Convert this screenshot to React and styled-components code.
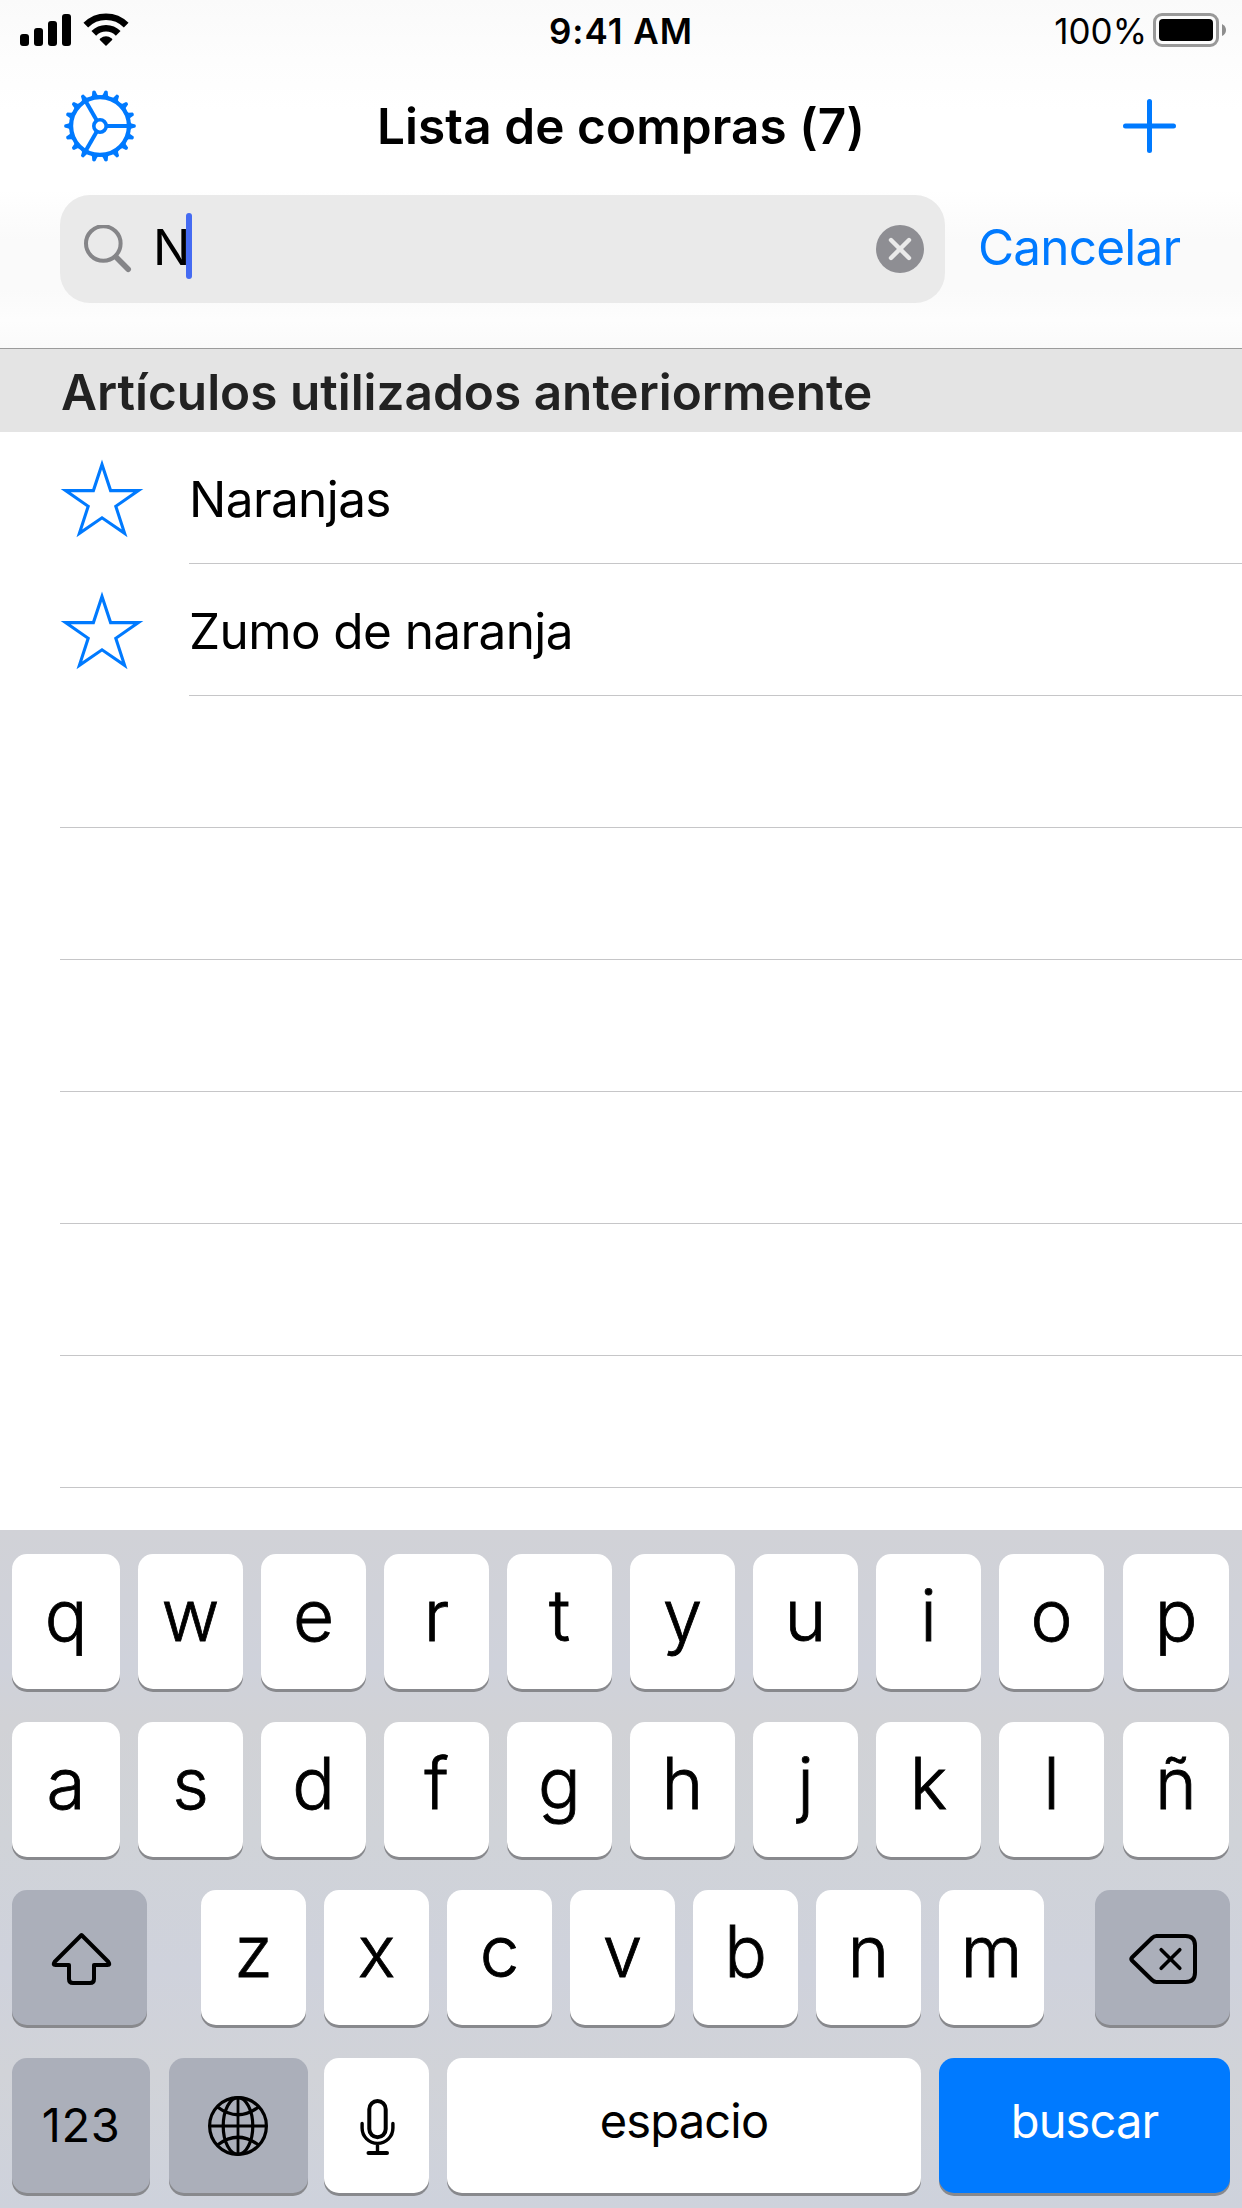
import React, { useState } from 'react';
import styled, { createGlobalStyle } from 'styled-components';

const GlobalStyle = createGlobalStyle`
  * {
    box-sizing: border-box;
  }

  body {
    margin: 0;
    background: #fff;
    font-family: Inter, "Liberation Sans", sans-serif;
    color: #000;
  }
`;

const Screen = styled.div`
  width: 1242px;
  height: 2208px;
  display: flex;
  flex-direction: column;
  overflow: hidden;
  background: #fff;
`;

const Header = styled.header`
  height: 349px;
  flex: none;
  border-bottom: 1px solid #9b9b9b;
  background: linear-gradient(#fafafa 0, #fdfdfd 60px, #fff 110px, #fff 190px, #fafafa 240px, #fafafa 290px, #fdfdfd 320px, #fafafa 348px);
`;

const StatusBar = styled.div`
  display: grid;
  grid-template-columns: 1fr auto 1fr;
  align-items: center;
  height: 60px;
  padding: 3px 16px 0 16px;
  font-size: 35px;
  line-height: 40px;
`;

const StatusGroup = styled.div`
  display: flex;
  align-items: center;
  justify-content: ${(props) => (props.$end ? 'flex-end' : 'flex-start')};
  gap: ${(props) => (props.$end ? '6px' : '12px')};
  padding-left: ${(props) => (props.$end ? 0 : '4px')};

  svg {
    display: block;
    margin-top: -3px;
  }
`;

const Clock = styled.span`
  margin-top: -2px;
  font-weight: 600;
  letter-spacing: 1px;
`;

const BatteryLevel = styled.span`
  margin-top: -2px;
  letter-spacing: 0;
`;

const NavBar = styled.div`
  display: grid;
  grid-template-columns: 1fr auto 1fr;
  align-items: center;
  height: 132px;
  padding: 0 60px;
`;

const IconButton = styled.button`
  display: flex;
  justify-self: ${(props) => (props.$end ? 'end' : 'start')};
  padding: 0;
  border: none;
  background: none;
  color: #007aff;
  cursor: pointer;
`;

const Title = styled.h1`
  margin: 0;
  font-size: 49.5px;
  font-weight: 600;
  line-height: 60px;
  letter-spacing: 0.07px;
  white-space: nowrap;
`;

const SearchRow = styled.div`
  display: flex;
  align-items: center;
  padding: 3px 60px 0;
`;

const SearchField = styled.div`
  display: flex;
  align-items: center;
  width: 885px;
  height: 108px;
  padding: 0 21px 0 24px;
  border-radius: 30px;
  background: #eaeaea;
`;

const SearchText = styled.div`
  flex: 1;
  display: flex;
  align-items: center;
  height: 66px;
  margin: 0 0 6px 21px;
  font-size: 49.5px;
  line-height: 66px;
`;

const Query = styled.span`
  padding-top: 2px;
`;

const Caret = styled.span`
  width: 6px;
  height: 66px;
  margin-left: -4px;
  border-radius: 3px;
  background: #456bf2;
`;

const CancelButton = styled(IconButton)`
  margin: -4px 0 0 33px;
  font: 400 49.5px/60px Inter, "Liberation Sans", sans-serif;
  letter-spacing: -0.8px;
`;

const SectionTitle = styled.h2`
  flex: none;
  height: 83px;
  margin: 0;
  padding: 2px 61px 0;
  background: #e4e4e4;
  color: #222;
  font-size: 49.5px;
  font-weight: 600;
  line-height: 82px;
  letter-spacing: 0;
  white-space: nowrap;
`;

const List = styled.ul`
  flex: 1;
  margin: 0;
  padding: 0;
  list-style: none;
  overflow: hidden;
`;

const Item = styled.li`
  display: flex;
  height: 132px;
  padding-left: 60px;
`;

const ItemStar = styled.div`
  width: 129px;
  padding-top: 26px;
`;

const ItemBody = styled.div`
  flex: 1;
  border-bottom: 1px solid #c6c6c8;
  font-size: 49.5px;
  line-height: 134px;
  letter-spacing: -0.6px;
`;

const Keyboard = styled.div`
  flex: none;
  display: flex;
  flex-direction: column;
  gap: 33px;
  height: 678px;
  padding: 24px 12px 0;
  background: linear-gradient(#d1d2d7 0, #cfd2db 20%, #d1d2d6 28%, #d0d3d8 45%, #cfd2dc 65%, #d1d3d8 80%, #ced2dc 100%);
`;

const KeyRow = styled.div`
  display: flex;
  height: 135px;
`;

const keyColors = {
  light: '#fff',
  dark: '#abafba',
  blue: '#007aff',
};

const Key = styled.button`
  display: flex;
  flex: none;
  align-items: center;
  justify-content: center;
  width: ${(props) => props.$width || 105}px;
  height: 135px;
  margin: 0 0 0 ${(props) => props.$gap ?? 18}px;
  padding: 0 0 ${(props) => props.$lift || 0}px;
  border: none;
  border-radius: 15px;
  background: ${(props) => keyColors[props.$tone || 'light']};
  box-shadow: 0 3px 0 #88898d;
  color: ${(props) => (props.$tone === 'blue' ? '#fff' : '#000')};
  font-family: Inter, "Liberation Sans", sans-serif;
  font-size: ${(props) => props.$size || 71}px;
  font-weight: ${(props) => (props.$size ? 400 : 300)};
  line-height: 80px;
  letter-spacing: ${(props) => props.$spacing || 0}px;
  -webkit-text-stroke: ${(props) => (props.$size ? 0 : '0.8px')} #000;
`;

const SignalIcon = () => (
  <svg width="51" height="34" viewBox="0 0 51 34">
    <rect x="0" y="21" width="9" height="12" rx="3" />
    <rect x="14" y="15" width="9" height="18" rx="3" />
    <rect x="28" y="8" width="9" height="25" rx="3" />
    <rect x="42" y="1" width="9" height="32" rx="3" />
  </svg>
);

const WifiIcon = () => (
  <svg width="46" height="34" viewBox="0 0 46 34">
    <g fill="none" stroke="#000" strokeWidth="6.6">
      <path d="M2.8 12.2 A28.5 28.5 0 0 1 43.2 12.2" />
      <path d="M10.8 20.3 A17.2 17.2 0 0 1 35.2 20.3" />
    </g>
    <path d="M23 33 L16.9 27 Q16.2 26.2 17.2 25.5 Q23 21.2 28.8 25.5 Q29.8 26.2 29.1 27 Z" />
  </svg>
);

const BatteryIcon = () => (
  <svg width="73" height="34" viewBox="0 0 73 34">
    <rect x="1.5" y="1.5" width="63" height="31" rx="7.5" fill="none" stroke="#999" strokeWidth="3" />
    <rect x="6" y="6" width="54" height="22" rx="4" />
    <path d="M69 11 Q73 13 73 17 Q73 21 69 23 Z" fill="#8e8e8e" />
  </svg>
);

const TEETH = Array.from({ length: 18 }, (_, i) => i * 20);
const SPOKES = [0, 120, 240];

const GearIcon = () => (
  <svg width="80" height="74" viewBox="-40 -37 80 74">
    <g fill="none" stroke="currentColor">
      <circle r="28.9" strokeWidth="4.2" />
      <circle r="6.2" strokeWidth="3.6" />
      {SPOKES.map((angle) => (
        <path key={angle} d="M7 0 H28" strokeWidth="4" transform={`rotate(${angle})`} />
      ))}
    </g>
    {TEETH.map((angle) => (
      <path
        key={angle}
        d="M29.5 -4.6 L31.5 -2.6 L35.3 -1.6 Q36.6 0 35.3 1.6 L31.5 2.6 L29.5 4.6 Z"
        fill="currentColor"
        transform={`rotate(${angle})`}
      />
    ))}
  </svg>
);

const PlusIcon = () => (
  <svg width="66" height="60" viewBox="0 0 66 60">
    <path d="M9.5 30 H57.5 M33.5 5.5 V54.5" fill="none" stroke="currentColor" strokeWidth="5" strokeLinecap="round" />
  </svg>
);

const SearchIcon = () => (
  <svg width="48" height="48" viewBox="0 0 48 48">
    <g fill="none" stroke="#858588" strokeLinecap="round">
      <circle cx="19.3" cy="18.5" r="17.3" strokeWidth="4" />
      <path d="M32 32 L44.2 44.2" strokeWidth="5.6" />
    </g>
  </svg>
);

const ClearIcon = () => (
  <svg width="48" height="48" viewBox="0 0 48 48">
    <circle cx="24" cy="24" r="24" fill="#8e8e93" />
    <path d="M15 15 L33 33 M33 15 L15 33" stroke="#eaeaea" strokeWidth="4.4" strokeLinecap="round" />
  </svg>
);

const StarIcon = () => (
  <svg width="84" height="82" viewBox="0 0 84 82">
    <path
      d="M42 6.5 L50.6 32.6 H78.4 L55.8 48.3 L64.6 75.3 L42 59.8 L19.4 75.3 L28.2 48.3 L5.6 32.6 H33.4 Z"
      fill="none"
      stroke="#007aff"
      strokeWidth="3.1"
      strokeMiterlimit="10"
    />
  </svg>
);

// every key icon is drawn on an 80x80 board centred on its key
const KeyIcon = ({ children }) => (
  <svg width="80" height="80" viewBox="0.5 0.5 80 80" fill="none" stroke="#000" strokeWidth="4" strokeLinecap="round" strokeLinejoin="round">
    {children}
  </svg>
);

const ShiftIcon = () => (
  <KeyIcon>
    <path d="M42 17.5 L69 44.5 Q71 47.5 68 47.5 H54.5 V61.5 Q54.5 65.5 50.5 65.5 H33.5 Q29.5 65.5 29.5 61.5 V47.5 H16 Q13 47.5 15 44.5 Z" />
  </KeyIcon>
);

const DeleteIcon = () => (
  <KeyIcon>
    <path d="M34 18.5 H63 Q72.5 18.5 72.5 28 V55 Q72.5 64.5 63 64.5 H34 Q31.5 64.5 29.5 62.5 L9.5 43 Q8 41.5 9.5 40 L29.5 20.5 Q31.5 18.5 34 18.5 Z" />
    <path d="M38.7 32.2 L57.3 50.8 M57.3 32.2 L38.7 50.8" strokeWidth="3.6" />
  </KeyIcon>
);

const GlobeIcon = () => (
  <KeyIcon>
    <g strokeWidth="3.2" strokeLinecap="butt">
      <circle cx="39.5" cy="40.5" r="28.4" />
      <ellipse cx="39.5" cy="40.5" rx="14.8" ry="28.4" />
      <path d="M39.5 12 V69 M11 40.5 H68" strokeWidth="2.8" />
      <path d="M19 21.5 Q39.5 37 60 21.5 M19 59.5 Q39.5 44 60 59.5" />
    </g>
  </KeyIcon>
);

const MicIcon = () => (
  <KeyIcon>
    <rect x="32.8" y="15.5" width="16.4" height="36.2" rx="8.2" strokeWidth="4" />
    <path d="M25.6 38 V42.5 A15.4 15.4 0 0 0 56.4 42.5 V38 M41 58 V67" strokeWidth="3.4" />
    <path d="M32 67.5 H50.5" />
  </KeyIcon>
);

const suggestions = ['Naranjas', 'Zumo de naranja'];
const emptyRows = 6;
const topLetters = ['qwertyuiop', 'asdfghjklñ'];

const App = () => {
  const [query, setQuery] = useState('N');

  const typeLetter = (letter) => {
    setQuery((current) => current + letter);
  };

  const renderLetter = (letter, props) => (
    <Key key={letter} $lift={13} onClick={() => typeLetter(letter)} {...props}>
      {letter}
    </Key>
  );

  // the outer columns are slightly wider than the others
  const edgeProps = (index) => {
    if (index === 0) return { $width: 108, $gap: 0 };
    if (index === 9) return { $width: 106, $gap: 19 };
    return {};
  };

  return (
    <>
      <GlobalStyle />
      <Screen>
        <Header>
          <StatusBar>
            <StatusGroup>
              <SignalIcon />
              <WifiIcon />
            </StatusGroup>
            <Clock>9:41 AM</Clock>
            <StatusGroup $end>
              <BatteryLevel>100%</BatteryLevel>
              <BatteryIcon />
            </StatusGroup>
          </StatusBar>
          <NavBar>
            <IconButton>
              <GearIcon />
            </IconButton>
            <Title>Lista de compras (7)</Title>
            <IconButton $end>
              <PlusIcon />
            </IconButton>
          </NavBar>
          <SearchRow>
            <SearchField>
              <SearchIcon />
              <SearchText>
                <Query>{query}</Query>
                <Caret />
              </SearchText>
              <IconButton onClick={() => setQuery('')}>
                <ClearIcon />
              </IconButton>
            </SearchField>
            <CancelButton>Cancelar</CancelButton>
          </SearchRow>
        </Header>
        <SectionTitle>Artículos utilizados anteriormente</SectionTitle>
        <List>
          {suggestions.map((name) => (
            <Item key={name}>
              <ItemStar>
                <StarIcon />
              </ItemStar>
              <ItemBody>{name}</ItemBody>
            </Item>
          ))}
          {Array.from({ length: emptyRows }, (_, index) => (
            <Item key={index}>
              <ItemBody />
            </Item>
          ))}
        </List>
        <Keyboard>
          {topLetters.map((letters) => (
            <KeyRow key={letters}>
              {letters.split('').map((letter, index) => renderLetter(letter, edgeProps(index)))}
            </KeyRow>
          ))}
          <KeyRow>
            <Key $tone="dark" $width={135} $gap={0}>
              <ShiftIcon />
            </Key>
            {'zxcvbnm'.split('').map((letter, index) => renderLetter(letter, index === 0 ? { $gap: 54 } : {}))}
            <Key $tone="dark" $width={135} $gap={51} onClick={() => setQuery(query.slice(0, -1))}>
              <DeleteIcon />
            </Key>
          </KeyRow>
          <KeyRow>
            <Key $tone="dark" $width={138} $gap={0} $size={47} $lift={2} $spacing={0.6}>
              123
            </Key>
            <Key $tone="dark" $width={139} $gap={19}>
              <GlobeIcon />
            </Key>
            <Key $gap={16}>
              <MicIcon />
            </Key>
            <Key $width={474} $size={47} $lift={9} $spacing={-0.8} onClick={() => typeLetter(' ')}>
              espacio
            </Key>
            <Key $tone="blue" $width={291} $size={47} $lift={9} $spacing={-0.9}>
              buscar
            </Key>
          </KeyRow>
        </Keyboard>
      </Screen>
    </>
  );
};

export default App;
